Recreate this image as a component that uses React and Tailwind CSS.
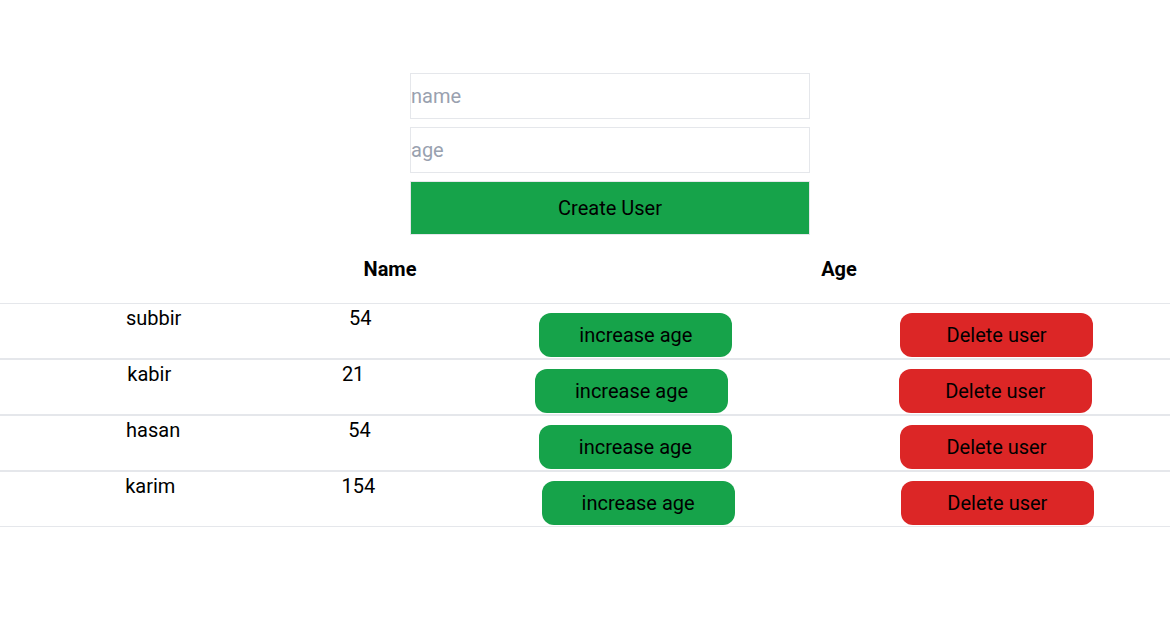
import { useState } from 'react';

const initialUsers = [
  { id: 1, name: 'subbir', age: 54 },
  { id: 2, name: 'kabir', age: 21 },
  { id: 3, name: 'hasan', age: 54 },
  { id: 4, name: 'karim', age: 154 },
];

export default function App() {
  const [users, setUsers] = useState(initialUsers);
  const [name, setName] = useState('');
  const [age, setAge] = useState('');

  const createUser = () => {
    if (!name) return;
    setUsers([...users, { id: Date.now(), name, age: Number(age) || 0 }]);
    setName('');
    setAge('');
  };

  const increaseAge = (id) => {
    setUsers(users.map((u) => (u.id === id ? { ...u, age: u.age + 1 } : u)));
  };

  const deleteUser = (id) => {
    setUsers(users.filter((u) => u.id !== id));
  };

  return (
    <div className="min-h-screen bg-white font-['Roboto','Liberation_Sans',sans-serif] text-xl text-black overflow-hidden">
      {/* Form */}
      <div className="ml-[410px] w-[400px] pt-[73px] flex flex-col gap-2">
        <input
          value={name}
          onChange={(e) => setName(e.target.value)}
          placeholder="name"
          className="h-[46px] w-full border border-gray-200 px-0 text-xl outline-none placeholder:text-gray-400"
        />
        <input
          value={age}
          onChange={(e) => setAge(e.target.value)}
          placeholder="age"
          className="h-[46px] w-full border border-gray-200 px-0 text-xl outline-none placeholder:text-gray-400"
        />
        <button
          onClick={createUser}
          className="h-[54px] w-full border border-gray-200 bg-[#16a34a] text-xl text-black"
        >
          Create User
        </button>
      </div>

      {/* Table head */}
      <div className="flex h-[68px] pt-[20px] font-bold">
        <div className="ml-[290px] w-[200px] text-center">Name</div>
        <div className="ml-[249px] w-[200px] text-center">Age</div>
      </div>

      {/* Rows */}
      <div>
        {users.map((u) => (
          <div key={u.id} className="h-[56px] border-y border-gray-200 overflow-hidden">
            <div className="flex items-start justify-around pl-[42px] mr-[-7px]">
              <span>{u.name}</span>
              <span>{u.age}</span>
              <button
                onClick={() => increaseAge(u.id)}
                className="mt-[9px] w-[193px] rounded-xl bg-[#16a34a] py-2 text-xl text-black"
              >
                increase age
              </button>
              <button
                onClick={() => deleteUser(u.id)}
                className="mt-[9px] w-[193px] rounded-xl bg-[#dc2626] py-2 text-xl text-black"
              >
                Delete user
              </button>
            </div>
          </div>
        ))}
      </div>
    </div>
  );
}
